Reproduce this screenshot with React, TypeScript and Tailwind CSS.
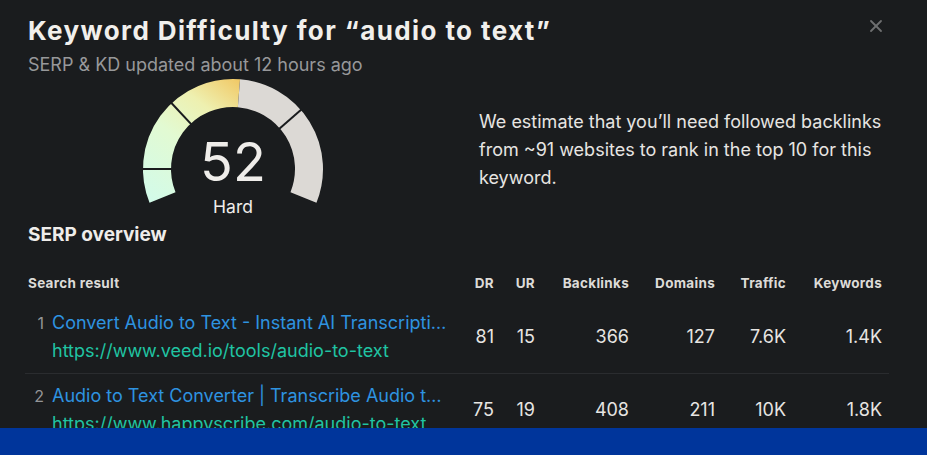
import { X } from "lucide-react";

const rows = [
  {
    rank: 1,
    title: "Convert Audio to Text - Instant AI Transcription Online",
    url: "https://www.veed.io/tools/audio-to-text",
    dr: "81",
    ur: "15",
    backlinks: "366",
    domains: "127",
    traffic: "7.6K",
    keywords: "1.4K",
  },
  {
    rank: 2,
    title: "Audio to Text Converter | Transcribe Audio to Text Online",
    url: "https://www.happyscribe.com/audio-to-text",
    dr: "75",
    ur: "19",
    backlinks: "408",
    domains: "211",
    traffic: "10K",
    keywords: "1.8K",
  },
];

const CX = 100;
const CY = 92;

function pt(r: number, deg: number) {
  const a = (deg * Math.PI) / 180;
  return [CX + r * Math.cos(a), CY - r * Math.sin(a)];
}

function arc(r: number, from: number, to: number) {
  const [x1, y1] = pt(r, from);
  const [x2, y2] = pt(r, to);
  const large = from - to > 180 ? 1 : 0;
  return `M ${x1} ${y1} A ${r} ${r} 0 ${large} 1 ${x2} ${y2}`;
}

function Gauge({ value }: { value: number }) {
  const start = 202;
  const end = -22;
  const cut = start - ((start - end) * value) / 100;
  const ticks = [180, 133, 41];

  return (
    <div className="relative ml-[105px] h-[145px] w-[200px] shrink-0">
      <svg width="200" height="145" viewBox="0 0 200 145">
        <defs>
          <linearGradient id="kd" gradientUnits="userSpaceOnUse" x1="15" y1="125" x2="108" y2="2">
            <stop offset="0" stopColor="#d2fbea" />
            <stop offset="0.45" stopColor="#e2fad2" />
            <stop offset="0.72" stopColor="#eef0b0" />
            <stop offset="1" stopColor="#f1c763" />
          </linearGradient>
        </defs>
        <path d={arc(76, start, cut)} stroke="url(#kd)" strokeWidth="28" fill="none" />
        <path d={arc(76, cut, end)} stroke="#dcd9d5" strokeWidth="28" fill="none" />
        {ticks.map((t) => {
          const [x1, y1] = pt(61, t);
          const [x2, y2] = pt(91, t);
          return <line key={t} x1={x1} y1={y1} x2={x2} y2={y2} stroke="#1a1c1e" strokeWidth="2" />;
        })}
      </svg>
      <div className="absolute inset-x-0 top-[55px] text-center text-[54px] leading-[60px] text-[#efedea]">
        {value}
      </div>
      <div className="absolute inset-x-0 top-[119px] text-center text-[17.5px] leading-[22px] text-[#efedea]">
        Hard
      </div>
    </div>
  );
}

const cols = "grid grid-cols-[435px_34px_41px_94px_86px_71px_96px] items-center";

export default function App() {
  return (
    <div
      className="relative h-[455px] w-[927px] overflow-hidden bg-[#1a1c1e] px-[28px] pt-[14px]"
      style={{ fontFamily: "Inter, 'Liberation Sans', sans-serif" }}
    >
      <h1 className="text-[26px] font-bold leading-[34px] tracking-[1.4px] text-[#f1efec]">
        Keyword Difficulty for “audio to text”
      </h1>
      <button className="absolute right-[41px] top-[16px] text-[#6e6f70]">
        <X size={20} strokeWidth={2.2} />
      </button>
      <p className="mt-[5px] text-[18px] leading-[24px] text-[#97989a]">
        SERP &amp; KD updated about 12 hours ago
      </p>

      <div className="flex">
        <Gauge value={52} />
        <p className="ml-[146px] mt-[31px] w-[412px] text-[18px] leading-[28px] text-[#e7e5e2]">
          We estimate that you’ll need followed backlinks from ~91 websites to rank in the top 10
          for this keyword.
        </p>
      </div>

      <h2 className="mt-[1px] text-[19px] font-bold leading-[24px] text-[#efedea]">SERP overview</h2>

      <div className="-ml-[3px] mt-[18px] w-[864px]">
        <div className={`${cols} h-[36px] text-[13.5px] font-bold tracking-[0.3px] text-[#dddbd8]`}>
          <div className="pl-[3px]">Search result</div>
          <div className="text-right">DR</div>
          <div className="text-right">UR</div>
          <div className="text-right">Backlinks</div>
          <div className="text-right">Domains</div>
          <div className="text-right">Traffic</div>
          <div className="text-right">Keywords</div>
        </div>
        {rows.map((r) => (
          <div
            key={r.rank}
            className={`${cols} border-b border-[#2a2c2f] py-[8px] text-[18px] leading-[28px] text-[#e7e5e2]`}
          >
            <div className="flex">
              <span className="w-[19px] shrink-0 text-right text-[16px] text-[#949597]">{r.rank}</span>
              <div className="ml-[8px] w-[396px] min-w-0">
                <div className="truncate text-[#2e93e0]">{r.title}</div>
                <div className="truncate text-[#20c4a3]">{r.url}</div>
              </div>
            </div>
            <div className="text-right">{r.dr}</div>
            <div className="text-right">{r.ur}</div>
            <div className="text-right">{r.backlinks}</div>
            <div className="text-right">{r.domains}</div>
            <div className="text-right">{r.traffic}</div>
            <div className="text-right">{r.keywords}</div>
          </div>
        ))}
      </div>

      <div className="absolute inset-x-0 bottom-0 h-[27px] bg-[#00359b]" />
    </div>
  );
}
